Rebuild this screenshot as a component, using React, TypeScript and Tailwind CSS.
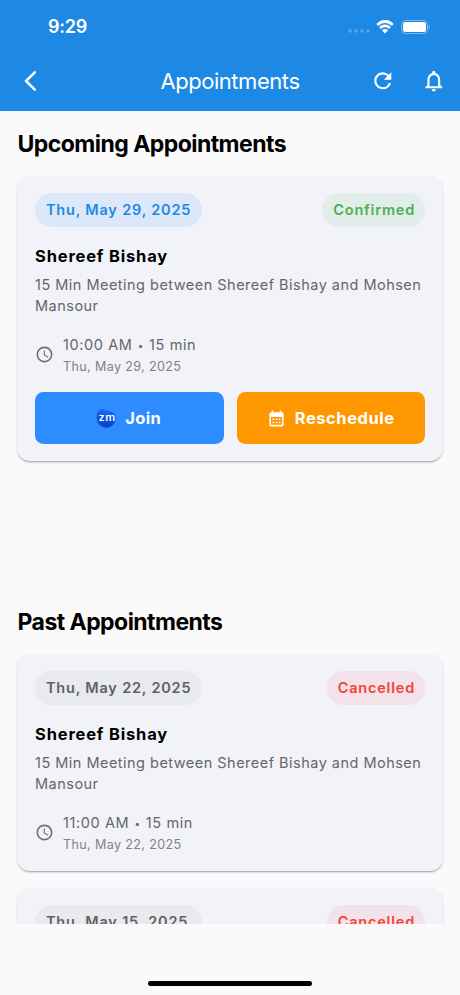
import React from "react";
import { MdAccessTime, MdCalendarMonth, MdNotificationsNone, MdRefresh } from "react-icons/md";

type Appointment = {
  date: string;
  time: string;
  duration: string;
  status: "Confirmed" | "Cancelled";
};

const upcoming: Appointment = { date: "Thu, May 29, 2025", time: "10:00 AM", duration: "15 min", status: "Confirmed" };
const past: Appointment[] = [
  { date: "Thu, May 22, 2025", time: "11:00 AM", duration: "15 min", status: "Cancelled" },
  { date: "Thu, May 15, 2025", time: "11:00 AM", duration: "15 min", status: "Cancelled" },
];

function StatusBar() {
  return (
    <div className="flex h-[53px] items-center justify-between pr-[30px] pl-[48px] text-white">
      <span className="text-[18px] leading-none font-semibold tracking-[-0.200px]">9:29</span>
      <div className="flex items-center">
        <svg width="22" height="6" viewBox="0 0 22 6" className="mt-[9px] mr-[6px]" fill="#fff" fillOpacity="0.260">
          <circle cx="2.200" cy="3" r="1.800" />
          <circle cx="8.100" cy="3" r="1.800" />
          <circle cx="14" cy="3" r="1.800" />
          <circle cx="19.900" cy="3" r="1.800" />
        </svg>
        <svg width="18" height="14" viewBox="0 0 18 13" preserveAspectRatio="none" className="mr-[7px]" fill="#fff">
          <path d="M9 2.7c2.5 0 4.8 1 6.5 2.600.1.100.4.100.5 0l1.400-1.300c.2-.1.200-.3 0-.5C12.700-1.200 5.300-1.200.6 3.500c-.2.200-.2.400 0 .5L2 5.300c.2.100.4.100.5 0C4.200 3.700 6.500 2.700 9 2.700z" />
          <path d="M9 6.800c1.400 0 2.700.5 3.700 1.400.1.100.4.100.5 0l1.300-1.300c.2-.1.200-.3 0-.5-3.100-2.900-7.900-2.900-11 0-.2.200-.2.400 0 .5l1.300 1.300c.1.100.4.100.5 0 1-.9 2.300-1.400 3.700-1.400z" />
          <path d="M11.700 9.900c.1-.1.100-.4 0-.5-1.500-1.300-3.900-1.300-5.400 0-.1.100-.1.400 0 .5l2.400 2.500c.2.200.4.200.6 0z" />
        </svg>
        <svg width="29" height="14" viewBox="0 0 29 14">
          <rect x="0.500" y="0.500" width="26" height="13" rx="4" fill="none" stroke="#fff" strokeOpacity="0.400" />
          <rect x="2" y="2" width="23" height="10" rx="2.600" fill="#fff" />
          <path d="M27.600 4.700v4.600c1.500-.7 1.500-3.900 0-4.600z" fill="#fff" fillOpacity="0.450" />
        </svg>
      </div>
    </div>
  );
}

function AppBar() {
  return (
    <div className="grid h-[57px] grid-cols-[1fr_auto_1fr] items-center px-[13px] text-white">
      <svg width="14" height="20" viewBox="0 0 14 20" className="-mt-px ml-[10px]" fill="none" stroke="#fff" strokeWidth="2.500" strokeLinecap="round" strokeLinejoin="round">
        <path d="M11.800 1.300 3 10l8.800 8.700" />
      </svg>
      <h1 className="-mt-[2px] text-[22px] leading-none font-normal tracking-[-0.450px]">Appointments</h1>
      <div className="-mt-px flex items-center justify-end gap-[26px]">
        <MdRefresh size={25.600} />
        <MdNotificationsNone size={25.600} />
      </div>
    </div>
  );
}

function ZoomLogo() {
  return (
    <svg width="20" height="20" viewBox="0 0 20 20">
      <defs>
        <linearGradient id="zoomBlue" x1="0" y1="0" x2="0" y2="1">
          <stop offset="0" stopColor="#1a70f5" />
          <stop offset="0.500" stopColor="#0b4fe0" />
          <stop offset="1" stopColor="#0a45c8" />
        </linearGradient>
      </defs>
      <path d="M4 1.500C6.500.2 9 2 12.500 2.800 17.500 3.800 19.600 6 19.600 10.300c0 5.300-4 9.400-9.300 9.400S.7 15.600.7 10.300C.7 6.500 1.200 3 4 1.500z" fill="url(#zoomBlue)" />
      <text transform="translate(2.500 13) scale(1.140 1)" fontFamily="Inter, sans-serif" fontSize="9.600" fontWeight="600" fill="#fff">zm</text>
    </svg>
  );
}

function AppointmentCard({ item, active = false }: { item: Appointment; active?: boolean }) {
  return (
    <article className={`shrink-0 rounded-[13px] bg-[#f1f3f9] px-[18px] pt-[17px] shadow-[0_2px_2px_-1px_rgba(0,0,0,0.3),0_1px_3px_rgba(0,0,0,0.1)] ${active ? "pb-[17px]" : "pb-[15.500px]"}`}>
      <div className="flex h-[34px] items-center justify-between text-[14.500px] font-semibold">
        <span className={`flex h-full w-[167px] items-center rounded-full pt-px pl-[11px] tracking-[0.800px] whitespace-nowrap ${active ? "bg-[#dce8fa] text-[#1e88e5]" : "bg-[#e8eaef] text-[#616161]"}`}>
          {item.date}
        </span>
        <span className={`flex h-full items-center rounded-full pt-px pr-[10px] pl-[11px] tracking-[0.800px] ${active ? "bg-[#e2ede9] text-[#4caf50]" : "bg-[#f3e2e9] text-[#f44336]"}`}>
          {item.status}
        </span>
      </div>
      <h3 className="mt-[17px] text-[16.500px] leading-[24px] font-bold tracking-[0.830px] text-black">Shereef Bishay</h3>
      <p className="mt-[6px] mr-[-4px] text-[14.500px] leading-[21.400px] tracking-[0.480px] text-[#666]">
        15 Min Meeting between Shereef Bishay and Mohsen Mansour
      </p>
      <div className="mt-[16px] flex h-[45px] items-center text-[#6f7073]">
        <MdAccessTime size={19} className="mr-[9px]" />
        <div>
          <div className="text-[14.500px] leading-[23px] tracking-[0.600px] text-[#666]">
            {item.time} <span className="mx-[0.500px] inline-block align-[1px] text-[10px] leading-none">•</span> {item.duration}
          </div>
          <div className="text-[12.600px] leading-[21px] tracking-[0.350px] text-[#808184]">{item.date}</div>
        </div>
      </div>
      {active && (
        <div className="mt-[15px] grid h-[51.500px] grid-cols-2 gap-[13px] text-[16.500px] font-bold text-white">
          <button className="flex items-center justify-center gap-[9px] rounded-[8.500px] bg-[#2d8cff] pr-px tracking-[0.400px]">
            <ZoomLogo />
            Join
          </button>
          <button className="flex items-center justify-center gap-[9px] rounded-[8.500px] bg-[#ff9800] tracking-[0.540px]">
            <MdCalendarMonth size={19} />
            Reschedule
          </button>
        </div>
      )}
    </article>
  );
}

export default function App() {
  return (
    <div className="flex h-[995px] w-[460px] flex-col overflow-hidden bg-[#fafafa] font-['Inter',sans-serif]">
      <header className="h-[110.500px] shrink-0 bg-[#1e88e5]">
        <StatusBar />
        <AppBar />
      </header>
      <main className="flex h-[813.500px] shrink-0 flex-col overflow-hidden px-[17px]">
        <section className="h-[478px] shrink-0 pt-[17px]">
          <h2 className="mb-[16px] pl-[0.500px] text-[23px] leading-[32px] font-bold tracking-[-0.540px] text-black">Upcoming Appointments</h2>
          <AppointmentCard item={upcoming} active />
        </section>
        <section className="flex flex-col pt-[17px]">
          <h2 className="mb-[16px] pl-[0.500px] text-[23px] leading-[32px] font-bold tracking-[-0.540px] text-black">Past Appointments</h2>
          <div className="flex flex-col gap-[17px]">
            {past.map((item) => (
              <AppointmentCard key={item.date} item={item} />
            ))}
          </div>
        </section>
      </main>
      <footer className="flex flex-1 items-end justify-center pb-[9px]">
        <div className="h-[5px] w-[164px] rounded-full bg-black" />
      </footer>
    </div>
  );
}
